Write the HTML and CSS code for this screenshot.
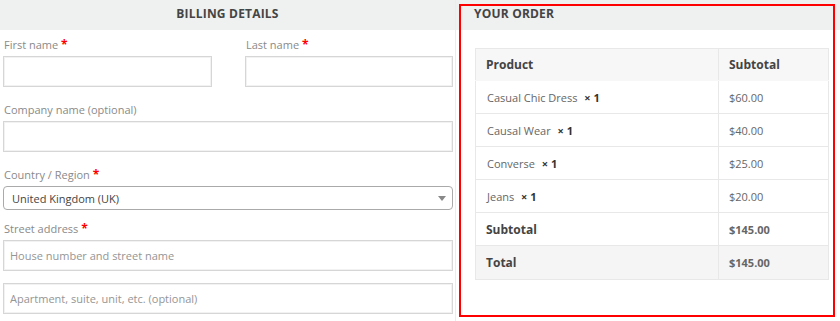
FILE: index.html
```html
<!DOCTYPE html>
<html lang="en">
<head>
<meta charset="utf-8">
<title>Checkout</title>
<link rel="stylesheet" href="styles.css">
</head>
<body>
<div class="checkout">
  <section class="billing">
    <h3 class="band band-center">BILLING DETAILS</h3>
    <div class="form">
      <div class="row-two">
        <div class="field">
          <label class="lbl">First name <abbr class="req">*</abbr></label>
          <input class="inp" type="text">
        </div>
        <div class="field">
          <label class="lbl">Last name <abbr class="req">*</abbr></label>
          <input class="inp" type="text">
        </div>
      </div>
      <div class="field">
        <label class="lbl">Company name (optional)</label>
        <input class="inp" type="text">
      </div>
      <div class="field field-select">
        <label class="lbl">Country / Region <abbr class="req">*</abbr></label>
        <div class="select">
          <span>United Kingdom (UK)</span>
          <span class="caret"></span>
        </div>
      </div>
      <div class="field field-street">
        <label class="lbl">Street address <abbr class="req">*</abbr></label>
        <input class="inp inp-street" type="text" placeholder="House number and street name">
        <input class="inp" type="text" placeholder="Apartment, suite, unit, etc. (optional)">
      </div>
    </div>
  </section>
  <section class="order">
    <h3 class="band band-left">YOUR ORDER</h3>
    <table class="tbl">
      <thead>
        <tr class="head"><th class="c1">Product</th><th class="c2">Subtotal</th></tr>
      </thead>
      <tbody>
        <tr><td class="c1">Casual Chic Dress <strong class="qty">× 1</strong></td><td class="c2">$60.00</td></tr>
        <tr><td class="c1">Causal Wear <strong class="qty">× 1</strong></td><td class="c2">$40.00</td></tr>
        <tr><td class="c1">Converse <strong class="qty">× 1</strong></td><td class="c2">$25.00</td></tr>
        <tr><td class="c1">Jeans <strong class="qty">× 1</strong></td><td class="c2">$20.00</td></tr>
      </tbody>
      <tfoot>
        <tr class="sub"><th class="c1">Subtotal</th><td class="c2 strong">$145.00</td></tr>
        <tr class="total"><th class="c1">Total</th><td class="c2 strong">$145.00</td></tr>
      </tfoot>
    </table>
    <div class="highlight"></div>
  </section>
</div>
</body>
</html>
```
FILE: styles.css
```css
* { box-sizing: border-box; }
html, body { margin: 0; padding: 0; background: #fff; }
body {
  font-family: "Open Sans", "Liberation Sans", sans-serif;
  color: #666;
  width: 840px;
  height: 321px;
  overflow: hidden;
}
.checkout { display: flex; height: 321px; }
.billing { width: 456px; border-right: 1px solid #ececec; }
.order { flex: 1; position: relative; }

.band {
  margin: 0;
  height: 30px;
  background: #eff0f0;
  font-size: 12px;
  font-weight: 700;
  color: #444;
  line-height: 28px;
  letter-spacing: 0.2px;
}
.band-center { text-align: center; }
.band-left { padding-left: 18px; }

.form { padding: 6px 2px 0 3px; }
.row-two { display: grid; grid-template-columns: 209px 208px; column-gap: 33px; }
.field { display: flex; flex-direction: column; margin-bottom: 14px; }
.field-select { margin-bottom: 10px; }
.lbl {
  font-size: 11px;
  line-height: 18px;
  height: 18px;
  color: #8a8a8a;
  margin: 0 0 2px 1px;
}
.req { color: #f00; font-weight: 700; text-decoration: none; font-size: 12px; }
.inp {
  height: 31px;
  width: 100%;
  border: 1px solid #d6d6d6;
  box-shadow: inset 0 0 0 1px #f2f2f2;
  padding: 0 6px;
  font-family: inherit;
  font-size: 11px;
  color: #444;
  background: #fff;
  margin: 0;
  outline: none;
}
.inp::placeholder { color: #959595; }
.inp-street { margin-bottom: 12px; }
.select {
  height: 24px;
  border: 1px solid #aaa;
  border-radius: 4px;
  display: flex;
  align-items: center;
  justify-content: space-between;
  padding: 0 6px 0 8px;
  font-size: 11px;
  color: #444;
}
.caret {
  width: 0; height: 0;
  border-left: 4px solid transparent;
  border-right: 4px solid transparent;
  border-top: 5px solid #888;
}

.tbl {
  margin: 18px 11px 0 19px;
  width: 354px;
  border-collapse: collapse;
  border: 1px solid #e8e8e8;
  font-size: 11px;
}
.tbl th, .tbl td {
  border: 1px solid #e8e8e8;
  text-align: left;
  padding: 0 10px;
  height: 33px;
  vertical-align: middle;
}
.tbl .c1 { width: 243px; }
.tbl th { font-size: 12px; font-weight: 700; color: #444; }
.head th { height: 32px; background: #f7f7f7; border-bottom-color: #f7f7f7; }
.head th.c1 { border-right: 1px solid #e8e8e8; }
.tbl td.c1 { color: #666; padding-left: 11px; }
.qty { font-size: 11px; color: #333; margin-left: 4px; }
.tbl td.c2 { color: #666; }
.tbl .strong { font-weight: 700; color: #444; }
.total th, .total td { background: #f5f5f5; height: 34px; }

.highlight {
  position: absolute;
  top: 4px;
  left: 3px;
  width: 376px;
  height: 313px;
  border: 2px solid #ff0000;
  pointer-events: none;
}
```
